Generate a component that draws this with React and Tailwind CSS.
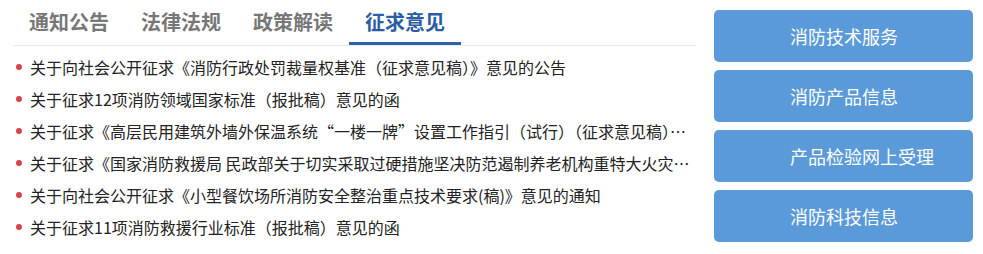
import React from "react";

const tabs = ["通知公告", "法律法规", "政策解读", "征求意见"];
const items = [
  "关于向社会公开征求《消防行政处罚裁量权基准（征求意见稿）》意见的公告",
  "关于征求12项消防领域国家标准（报批稿）意见的函",
  "关于征求《高层民用建筑外墙外保温系统“一楼一牌”设置工作指引（试行）（征求意见稿）》意见的函",
  "关于征求《国家消防救援局 民政部关于切实采取过硬措施坚决防范遏制养老机构重特大火灾事故的通知》意见的函",
  "关于向社会公开征求《小型餐饮场所消防安全整治重点技术要求(稿)》意见的通知",
  "关于征求11项消防救援行业标准（报批稿）意见的函",
];
const buttons = ["消防技术服务", "消防产品信息", "产品检验网上受理", "消防科技信息"];

export default function App() {
  return (
    <div
      className="w-[983px] h-[254px] bg-white flex"
      style={{ fontFamily: '"Noto Sans CJK SC", "Noto Sans", sans-serif' }}
    >
      <div className="ml-[13px] w-[682px] flex flex-col">
        <div className="flex h-[46px] border-b border-[#e3eaf5]">
          {tabs.map((t, i) => (
            <div
              key={t}
              className={
                "w-[112px] h-[45px] flex justify-center pt-[11px] text-[20px] font-bold leading-[22px] " +
                (i === 3
                  ? "text-[#2b5ca6] border-b-[3px] border-[#2d62a8]"
                  : "text-[#777777]")
              }
            >
              {t}
            </div>
          ))}
        </div>
        <ul className="pt-[5px] flex flex-col">
          {items.map((t) => (
            <li key={t} className="h-[32px] flex items-center">
              <span className="ml-[3px] w-[6px] h-[6px] rounded-full bg-[#d9434b] shrink-0" />
              <span className="ml-[8px] text-[16px] text-[#222] truncate w-[662px] leading-[22px]">
                {t}
              </span>
            </li>
          ))}
        </ul>
      </div>
      <div className="ml-[19px] pt-[10px] flex flex-col gap-[8px]">
        {buttons.map((b) => (
          <div
            key={b}
            className="w-[259px] h-[52px] rounded-[5px] bg-[#5b9ad8] text-white text-[18px] leading-[24px] flex items-center pl-[76px]"
          >
            {b}
          </div>
        ))}
      </div>
    </div>
  );
}
